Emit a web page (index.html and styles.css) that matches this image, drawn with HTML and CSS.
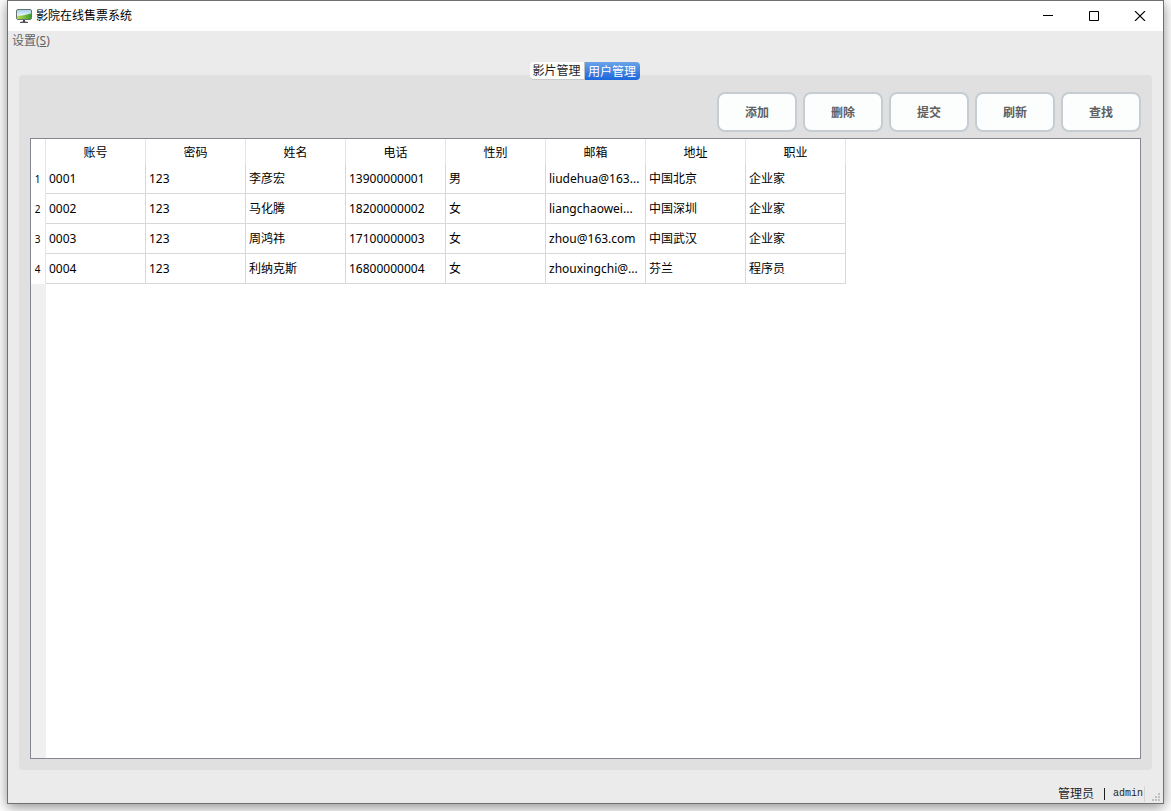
FILE: index.html
```html
<!DOCTYPE html>
<html lang="zh-CN">
<head>
<meta charset="utf-8">
<title>影院在线售票系统</title>
<link rel="stylesheet" href="styles.css">
</head>
<body>
<div class="window">
  <header class="titlebar">
    <svg class="app-icon" width="16" height="16" viewBox="0 0 16 16" aria-hidden="true">
      <defs>
        <linearGradient id="sky" x1="0" y1="0" x2="0" y2="1"><stop offset="0" stop-color="#7dbbe4"/><stop offset=".6" stop-color="#e2f4fb"/></linearGradient>
        <linearGradient id="grass" x1="0" y1="0" x2="1" y2="0"><stop offset="0" stop-color="#b9e04a"/><stop offset="1" stop-color="#3f9a30"/></linearGradient>
      </defs>
      <rect x="0.5" y="1.500" width="15" height="10" rx="1.500" fill="url(#sky)" stroke="#66736e"/>
      <path d="M1 7.500C5 8.500 9 7 15 5.500V10.500Q15 11 14 11H2Q1 11 1 10.500Z" fill="url(#grass)"/>
      <path d="M1 2H15V4.500C11 6.500 6 7 1 7Z" fill="#fff" opacity=".25"/>
      <path d="M7 12H9V14H7Z" fill="#444"/>
      <path d="M4 14.500Q8 13 12 14.500Z" fill="#555" stroke="#555"/>
    </svg>
    <h1 class="title">影院在线售票系统</h1>
    <div class="window-controls">
      <button class="control" type="button" aria-label="最小化"><svg width="12" height="10" viewBox="0 0 12 10"><path d="M1 4.500H11" stroke="#000"/></svg></button>
      <button class="control" type="button" aria-label="最大化"><svg width="12" height="10" viewBox="0 0 12 10"><path d="M1.500.5H10.500V9.500H1.500Z" fill="none" stroke="#000"/></svg></button>
      <button class="control" type="button" aria-label="关闭"><svg width="12" height="10" viewBox="0 0 12 10"><path d="M1 0L11 10M11 0L1 10" stroke="#000" stroke-width="1.100"/></svg></button>
    </div>
  </header>
  <nav class="menubar"><button class="menu" type="button">设置(<u>S</u>)</button></nav>
  <main class="content">
    <div class="tabs" role="tablist">
      <button class="tab" type="button" role="tab" aria-selected="false">影片管理</button>
      <button class="tab tab-active" type="button" role="tab" aria-selected="true">用户管理</button>
    </div>
    <section class="panel">
      <div class="toolbar">
        <button class="action" type="button">添加</button>
        <button class="action" type="button">删除</button>
        <button class="action" type="button">提交</button>
        <button class="action" type="button">刷新</button>
        <button class="action" type="button">查找</button>
      </div>
      <div class="table-view">
        <table class="users">
          <thead>
            <tr><td class="index"></td><th>账号</th><th>密码</th><th>姓名</th><th>电话</th><th>性别</th><th>邮箱</th><th>地址</th><th>职业</th></tr>
          </thead>
          <tbody>
            <tr><th class="index">1</th><td>0001</td><td>123</td><td>李彦宏</td><td>13900000001</td><td>男</td><td>liudehua@163...</td><td>中国北京</td><td>企业家</td></tr>
            <tr><th class="index">2</th><td>0002</td><td>123</td><td>马化腾</td><td>18200000002</td><td>女</td><td>liangchaowei...</td><td>中国深圳</td><td>企业家</td></tr>
            <tr><th class="index">3</th><td>0003</td><td>123</td><td>周鸿祎</td><td>17100000003</td><td>女</td><td>zhou@163.com</td><td>中国武汉</td><td>企业家</td></tr>
            <tr><th class="index">4</th><td>0004</td><td>123</td><td>利纳克斯</td><td>16800000004</td><td>女</td><td>zhouxingchi@...</td><td>芬兰</td><td>程序员</td></tr>
          </tbody>
        </table>
        <div class="gutter"></div>
      </div>
    </section>
  </main>
  <footer class="statusbar">
    <span class="role">管理员</span><span class="bar"></span><span class="account">admin</span>
    <svg class="grip" width="9" height="9" viewBox="0 0 9 9" fill="#bfbfbf" aria-hidden="true"><path d="M7 0h2v2h-2zM4 3h2v2h-2zM7 3h2v2h-2zM1 6h2v2h-2zM4 6h2v2h-2zM7 6h2v2h-2z"/></svg>
  </footer>
</div>
</body>
</html>
```
FILE: styles.css
```css
* {
  box-sizing: border-box;
}

body {
  display: flex;
  min-height: 100vh;
  margin: 0;
  padding: 0 7px 7px;
  background: #fff;
  color: #000;
  font: 12px/16px "Noto Sans", "Noto Sans CJK SC", sans-serif;
}

button {
  margin: 0;
  padding: 0;
  border: 0;
  background: none;
  color: inherit;
  font: inherit;
}

.window {
  display: flex;
  flex: 1;
  flex-direction: column;
  border: 1px solid #707070;
  background: #ebebeb;
  box-shadow: 0 3px 12px rgba(0, 0, 0, 0.45);
}

.titlebar {
  display: flex;
  align-items: center;
  height: 30px;
  padding-left: 8px;
  background: #fff;
}

.title {
  margin: 0 auto 0 4px;
  font-size: 12px;
  font-weight: 400;
}

.window-controls {
  display: flex;
}

.control {
  display: grid;
  place-items: center;
  width: 46px;
  height: 28px;
}

.menubar {
  display: flex;
  padding: 2px 4px;
}

.menu {
  color: #646464;
}

.content {
  display: flex;
  flex: 1;
  flex-direction: column;
  padding: 11px 11px 0;
}

.tabs {
  z-index: 1;
  display: flex;
  justify-content: center;
  margin: 0 2px -5px 0;
}

.tab {
  width: 55px;
  height: 18px;
  padding-top: 1px;
  border-right: 1px solid #c0c0c0;
  border-bottom: 1px solid #c8c8c8;
  border-radius: 4px 0 0 4px;
  background: #fcfcfa;
  color: #1e1e1e;
  line-height: 16px;
}

.tab-active {
  padding-top: 2px;
  border: 0;
  border-radius: 0 4px 4px 0;
  background: linear-gradient(#6ba3e8, #1b66dc);
  color: #fff;
}

.panel {
  display: flex;
  flex: 1;
  flex-direction: column;
  gap: 6px;
  padding: 17px 11px 11px;
  border-radius: 4px;
  background: #e0e0e0;
}

.toolbar {
  display: flex;
  justify-content: flex-end;
  gap: 6px;
}

.action {
  width: 80px;
  height: 40px;
  padding-top: 2px;
  border: 2px solid #c5cdd3;
  border-radius: 8px;
  background: #fcfefe;
  color: #606060;
  font-weight: 700;
}

.table-view {
  display: flex;
  flex: 1;
  flex-direction: column;
  align-items: flex-start;
  border: 1px solid #828790;
  background: #fff;
}

.users {
  width: 815px;
  border-collapse: separate;
  border-spacing: 0;
  table-layout: fixed;
}

.users th,
.users td {
  height: 30px;
  padding: 0 3px;
  border-right: 1px solid #d8d8d8;
  border-bottom: 1px solid #d8d8d8;
  font-weight: 400;
  text-align: left;
  white-space: nowrap;
}

.users thead th,
.users thead td {
  height: 25px;
  padding-top: 2px;
  border-right-color: #e5e5e5;
  border-bottom: 0;
  text-align: center;
}

.users .index {
  width: 15px;
  padding: 0 1px 0 0;
  border-right-color: #e5e5e5;
  border-bottom: 0;
  font-size: 10px;
  text-align: center;
}

.gutter {
  flex: 1;
  width: 15px;
  background: #f0f0f0;
}

.statusbar {
  display: flex;
  align-items: center;
  justify-content: flex-end;
  height: 33px;
  padding: 14px 3px 0 0;
  color: #1e1e1e;
}

.bar {
  width: 1px;
  height: 12px;
  margin: 0 8px 0 10px;
  background: #1e1e1e;
}

.account {
  padding-right: 1px;
  border-right: 1px solid #d5d5d5;
  font-family: "Liberation Mono", monospace;
  font-size: 10px;
}

.grip {
  align-self: flex-end;
  margin: 0 0 1px 6px;
}
```
